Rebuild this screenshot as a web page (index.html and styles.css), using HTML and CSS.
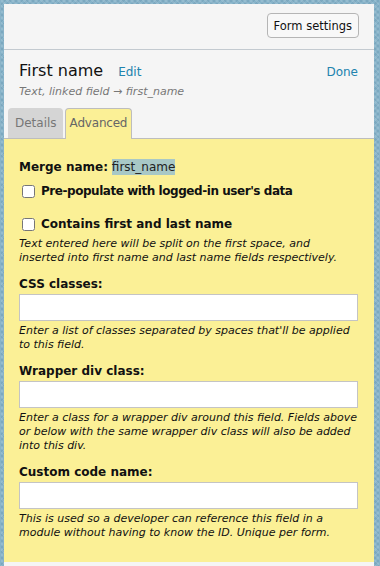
FILE: index.html
```html
<!DOCTYPE html>
<html lang="en">
<head>
    <meta charset="UTF-8">
    <meta name="viewport" content="width=device-width, initial-scale=1.0">
    <title>Field editor</title>
    <link rel="stylesheet" href="styles.css">
</head>
<body>
    <div class="panel">
        <div class="top-bar">
            <button class="btn">Form settings</button>
        </div>

        <div class="field-head">
            <div class="title-row">
                <h2>First name</h2>
                <a href="#" class="link">Edit</a>
                <a href="#" class="link done">Done</a>
            </div>
            <div class="subtitle">Text, linked field &rarr; first_name</div>
        </div>

        <div class="tabs">
            <div class="tab">Details</div>
            <div class="tab active">Advanced</div>
        </div>

        <div class="tab-panel">
            <div class="merge">
                <strong>Merge name:</strong> <span class="merge-value">first_name</span>
            </div>

            <label class="check first">
                <input type="checkbox">
                <span class="tight">Pre-populate with logged-in user's data</span>
            </label>

            <label class="check second">
                <input type="checkbox">
                <span>Contains first and last name</span>
            </label>
            <p class="help">Text entered here will be split on the first space, and inserted into first name and last name fields respectively.</p>

            <div class="field">
                <label class="field-label">CSS classes:</label>
                <input type="text" class="text-input">
                <p class="help">Enter a list of classes separated by spaces that'll be applied to this field.</p>
            </div>

            <div class="field">
                <label class="field-label">Wrapper div class:</label>
                <input type="text" class="text-input">
                <p class="help">Enter a class for a wrapper div around this field. Fields above or below with the same wrapper div class will also be added into this div.</p>
            </div>

            <div class="field">
                <label class="field-label">Custom code name:</label>
                <input type="text" class="text-input">
                <p class="help">This is used so a developer can reference this field in a module without having to know the ID. Unique per form.</p>
            </div>
        </div>
    </div>
</body>
</html>
```

FILE: styles.css
```css
html, body {
    height: 100%;
}

body {
    margin: 0;
    font-family: Verdana, 'DejaVu Sans', sans-serif;
    color: #111;
    background-color: #86b3c9;
    background-image: repeating-linear-gradient(45deg, rgba(255, 255, 255, 0.12) 0 2px, transparent 2px 4px),
        repeating-linear-gradient(-45deg, rgba(0, 40, 80, 0.08) 0 2px, transparent 2px 4px);
    display: flex;
    flex-direction: column;
    padding: 4px 6px 0 4px;
    box-sizing: border-box;
}

.panel {
    flex: 1;
    display: flex;
    flex-direction: column;
    background-color: #f5f5f5;
}

.top-bar {
    height: 45px;
    border-bottom: 1px solid #c3cad0;
    display: flex;
    justify-content: flex-end;
    align-items: center;
    padding-right: 15px;
}

.btn {
    font-family: inherit;
    font-size: 11.5px;
    color: #111;
    background-color: #f8f8f8;
    border: 1px solid #b5b5b5;
    border-radius: 4px;
    height: 25px;
    padding: 0 6px;
    margin-top: -2px;
}

.field-head {
    padding: 10px 16px 0 15px;
}

.title-row {
    display: flex;
    align-items: baseline;
}

.title-row h2 {
    margin: 0;
    font-size: 16px;
    font-weight: normal;
    line-height: 21px;
}

.link {
    color: #2183ae;
    text-decoration: none;
    font-size: 12px;
}

.title-row h2 + .link {
    margin-left: 15px;
}

.done {
    margin-left: auto;
}

.subtitle {
    font-size: 11px;
    font-style: italic;
    color: #777;
    line-height: 14px;
    margin-top: 4px;
}

.tabs {
    display: flex;
    gap: 2px;
    padding-left: 4px;
    margin-top: 9px;
    position: relative;
    z-index: 1;
}

.tab {
    font-size: 12px;
    color: #777;
    background-color: #d5d5d5;
    height: 30px;
    line-height: 30px;
    padding: 0 6px 0 7px;
    border-radius: 4px 4px 0 0;
    box-sizing: border-box;
}

.tab.active {
    background-color: #fbf096;
    color: #666;
    border: 1px solid #bdbdbd;
    border-bottom: none;
    height: 31px;
    line-height: 29px;
    padding: 0 4px;
    letter-spacing: -0.2px;
}

.tab-panel {
    flex: 1;
    background-color: #fbf096;
    border-top: 1px solid #bdbdbd;
    margin-top: -1px;
    margin-bottom: 4px;
    padding: 20px 16px 0 15px;
    font-size: 12px;
}

.merge {
    line-height: 16px;
}

.merge-value {
    background-color: #a8c8c6;
    font-size: 12px;
    color: #222;
    padding: 1px 0;
}

.check {
    display: flex;
    align-items: center;
    font-weight: bold;
    font-size: 12px;
    line-height: 16px;
}

.check .tight {
    letter-spacing: -0.45px;
}

.check input {
    width: 13px;
    height: 13px;
    margin: 0 6px 0 3px;
}

.check.first {
    margin-top: 8px;
}

.check.second {
    margin-top: 17px;
}

.help {
    margin: 5px 0 0 0;
    font-size: 11px;
    font-style: italic;
    line-height: 14px;
    color: #111;
}

.field {
    margin-top: 11px;
}

.field-label {
    display: block;
    font-weight: bold;
    font-size: 12px;
    line-height: 16px;
}

.text-input {
    display: block;
    box-sizing: border-box;
    width: 100%;
    height: 27px;
    margin-top: 2px;
    border: 1px solid #c4c4c4;
    background-color: #fff;
    font-family: inherit;
}

.field .help {
    margin-top: 3px;
}
```
